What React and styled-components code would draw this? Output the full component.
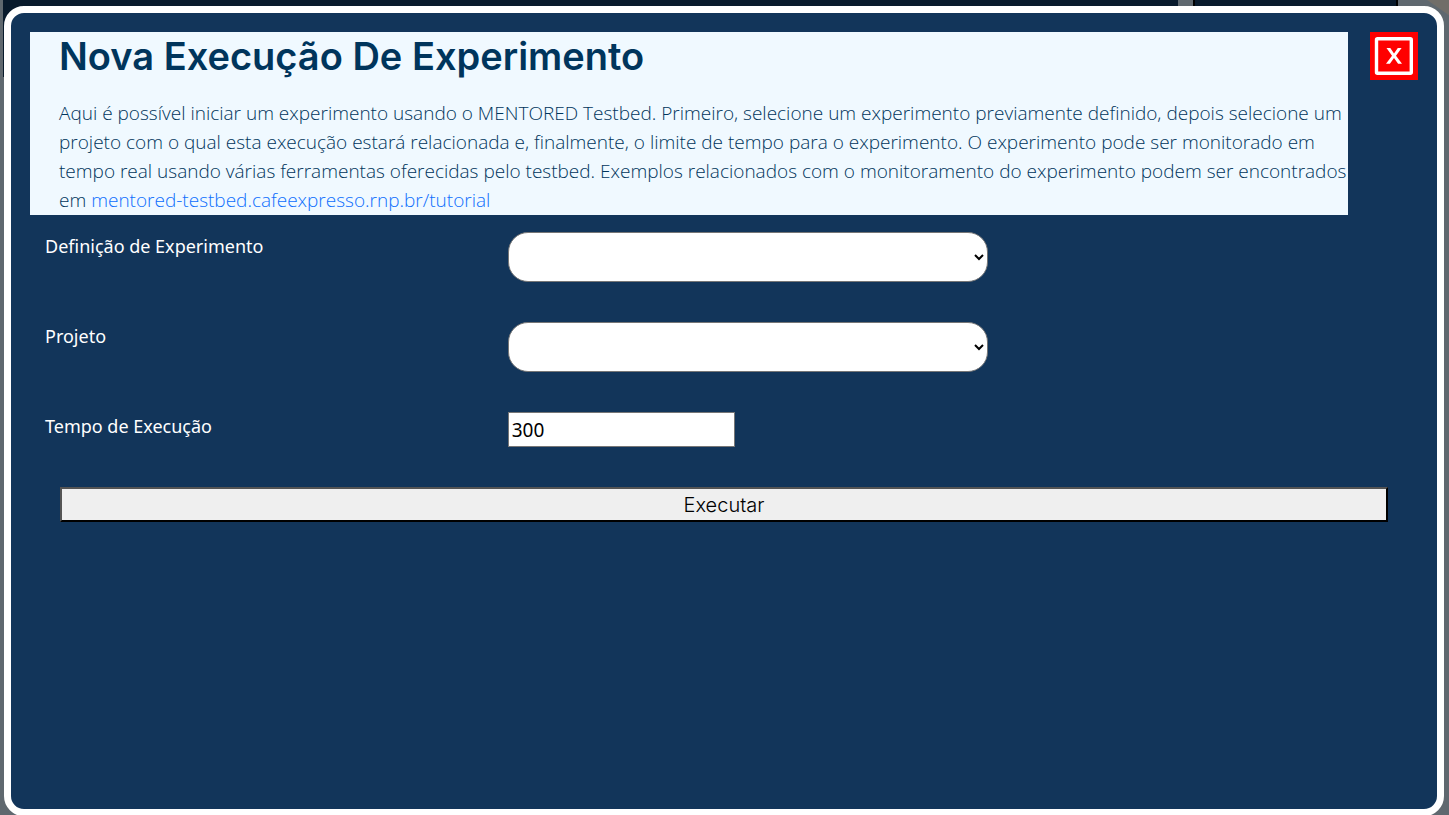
import React from "react";
import styled, { createGlobalStyle } from "styled-components";

const GlobalStyle = createGlobalStyle`
  *, *::before, *::after {
    box-sizing: border-box;
  }
  body {
    margin: 0;
    overflow: hidden;
    background: #5f686f;
    font-family: "Open Sans", "Noto Sans", sans-serif;
  }
`;

const Page = styled.div`
  min-height: 100vh;
`;

const Banner = styled.div`
  display: flex;
  gap: 15px;
  height: 77px;
  padding: 0 51px 0 3px;
  background: linear-gradient(215deg, #716e69 12px, transparent 13px);
`;

const BannerBlock = styled.div`
  flex: ${({ $wide }) => ($wide ? "1" : "0 0 205px")};
  background: #081a2c;
  border: solid #000000;
  border-width: ${({ $wide }) => ($wide ? "0" : "0 2px")};
`;

const Dialog = styled.div`
  position: fixed;
  inset: 6px 5px -1px 4px;
  padding: 19px;
  border: 7px solid #ffffff;
  border-radius: 20px;
  background: #12355a;
`;

const TopRow = styled.header`
  display: flex;
  align-items: flex-start;
  gap: 22px;
  margin-bottom: 17px;
`;

const Intro = styled.div`
  flex: 1;
  padding-left: 29px;
  background: #f0f9ff;
  color: #00355c;
`;

const Title = styled.h1`
  margin: 0 0 19px;
  font: 600 38px/48px Inter, sans-serif;
`;

const Description = styled.p`
  margin: 0;
  font-size: 19px;
  font-weight: 300;
  line-height: 29px;
`;

const TutorialLink = styled.a`
  color: #0d6efd;
  text-decoration: none;
`;

const CloseButton = styled.button`
  flex: none;
  display: flex;
  width: 48px;
  height: 48px;
  padding: 0;
  border: 0;
  background: #ff0000;
`;

const Field = styled.div`
  display: grid;
  grid-template-columns: 1fr 2fr;
  align-items: start;
  margin-bottom: 40px;
`;

const FieldLabel = styled.label`
  padding-left: 15px;
  color: #ffffff;
  font-family: "Noto Sans", sans-serif;
  font-size: 18px;
  line-height: 28px;
`;

const Control = styled.div`
  display: flex;
  padding-left: 15px;
`;

const Select = styled.select`
  width: 100%;
  max-width: 480px;
  height: 50px;
  border: 1px solid #767676;
  border-radius: 20px;
  background: #ffffff;
  font: 400 19px/29px "Noto Sans", sans-serif;
`;

const NumberInput = styled.input`
  width: 227px;
  height: 35px;
  padding: 0 3px;
  border: 1px solid #767676;
  background: #ffffff;
  color: #000000;
  font: 400 19px/29px "Noto Sans", sans-serif;
`;

const SubmitRow = styled.div`
  padding: 0 30px;
  margin-right: 0;
`;

const SubmitButton = styled.button`
  display: block;
  width: 100%;
  height: 35px;
  padding: 2px 0 0;
  border: 2px outset #000000;
  background: #efefef;
  color: #000000;
  font: 300 20px/29px Inter, sans-serif;
`;

function CloseIcon() {
  return (
    <svg width="48" height="48" viewBox="0 0 48 48" fill="none" stroke="#ffffff" aria-hidden="true">
      <rect x="6.5" y="6.8" width="34.8" height="34.5" rx="1" strokeWidth="3.4" />
      <path d="M16.5 16h3.8l3.7 5.4 3.8-5.4h3.8l-5.6 7.8 6 8h-3.9l-4.1-5.7-4.1 5.7H16l6-8z" fill="#ffffff" stroke="none" />
    </svg>
  );
}

export default function App() {
  return (
    <>
      <GlobalStyle />
      <Page>
        <Banner>
          <BannerBlock $wide />
          <BannerBlock />
        </Banner>
        <Dialog role="dialog" aria-labelledby="dialog-title">
          <TopRow>
            <Intro>
              <Title id="dialog-title">Nova Execução De Experimento</Title>
              <Description>
                Aqui é possível iniciar um experimento usando o MENTORED Testbed. Primeiro, selecione um
                experimento previamente definido, depois selecione um projeto com o qual esta execução
                estará relacionada e, finalmente, o limite de tempo para o experimento. O experimento pode
                ser monitorado em tempo real usando várias ferramentas oferecidas pelo testbed. Exemplos
                relacionados com o monitoramento do experimento podem ser encontrados em{" "}
                <TutorialLink href="#tutorial">mentored-testbed.cafeexpresso.rnp.br/tutorial</TutorialLink>
              </Description>
            </Intro>
            <CloseButton type="button" aria-label="Fechar">
              <CloseIcon />
            </CloseButton>
          </TopRow>
          <form>
            <Field>
              <FieldLabel htmlFor="definition">Definição de Experimento</FieldLabel>
              <Control>
                <Select id="definition" />
              </Control>
            </Field>
            <Field>
              <FieldLabel htmlFor="project">Projeto</FieldLabel>
              <Control>
                <Select id="project" />
              </Control>
            </Field>
            <Field>
              <FieldLabel htmlFor="duration">Tempo de Execução</FieldLabel>
              <Control>
                <NumberInput id="duration" type="number" defaultValue="300" />
              </Control>
            </Field>
            <SubmitRow>
              <SubmitButton type="button">Executar</SubmitButton>
            </SubmitRow>
          </form>
        </Dialog>
      </Page>
    </>
  );
}
